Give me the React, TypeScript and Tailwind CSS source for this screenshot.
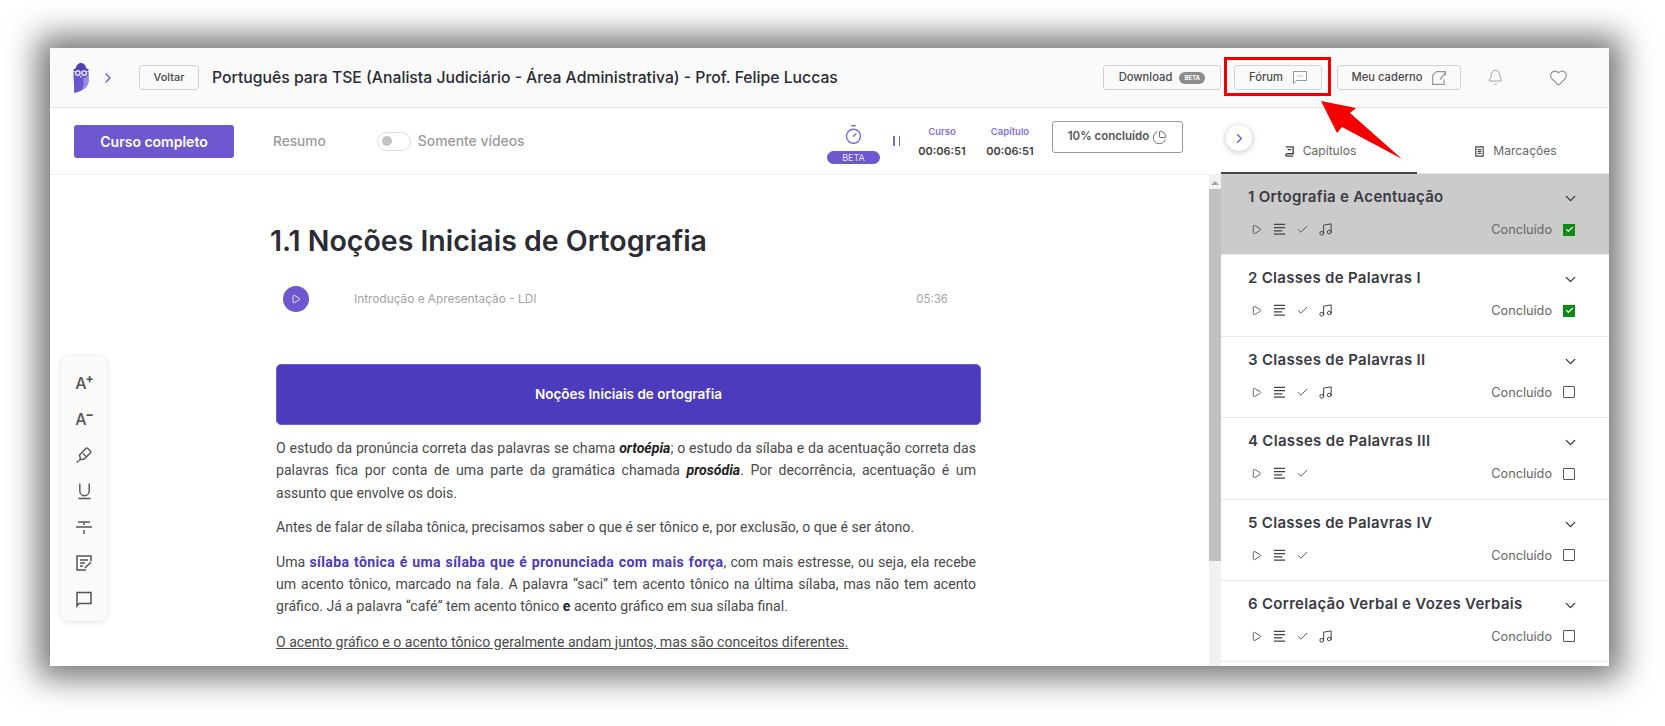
import { Bell, Heart, ChevronRight, ChevronDown, Timer, PieChart, Music, Check, Play } from "lucide-react";

const chapters = [
  { t: "1 Ortografia e Acentuação", sel: true, done: true, music: true },
  { t: "2 Classes de Palavras I", done: true, music: true },
  { t: "3 Classes de Palavras II", music: true },
  { t: "4 Classes de Palavras III" },
  { t: "5 Classes de Palavras IV" },
  { t: "6 Correlação Verbal e Vozes Verbais", music: true },
];

function Lines({ className = "" }: { className?: string }) {
  return (
    <svg viewBox="0 0 14 14" className={className} fill="none" stroke="currentColor" strokeWidth="1.4">
      <path d="M1 1.500h12M1 5h12M1 8.500h9M1 12h12" />
    </svg>
  );
}

function Owl() {
  return (
    <svg viewBox="0 0 16 30" className="w-[16px] h-[30px]">
      <path d="M0.500 9c0-1 15-1 15 0v9c0 6-6 10-14.500 12C1.500 26 .5 14 .5 9z" fill="#6a55cc" />
      <path d="M10 15c3 0 4-2 5.500-4v7c0 5-3 7-7 9 2-3 3-7 1.500-12z" fill="#9c8be6" />
      <path d="M3 5c0-3 3-5 5-5s5 2 5 5l2.500 1.500v1.500H.5V6.500z" fill="#5240b8" />
      <circle cx="4.800" cy="10" r="3" fill="#d9d3f5" />
      <circle cx="11.200" cy="10" r="3" fill="#d9d3f5" />
      <circle cx="4.800" cy="10" r="1.300" fill="#5240b8" />
      <circle cx="11.200" cy="10" r="1.300" fill="#5240b8" />
      <path d="M7 13h2l-1 2z" fill="#f1eefc" />
    </svg>
  );
}

function HeadButton({ children, className = "" }: { children: React.ReactNode; className?: string }) {
  return (
    <div className={`h-[25px] flex items-center justify-center border-[1.5px] border-[#d2d2d2] rounded-[3px] bg-[#fafafa] text-[11.200px] font-medium text-[#4a4a4a] ${className}`}>
      {children}
    </div>
  );
}

export default function App() {
  return (
    <div className="w-full h-[726px] bg-white pt-[48px] pl-[50px] overflow-hidden font-['Inter',sans-serif]">
      <div className="relative w-[1559px] h-[618px] flex flex-col bg-white shadow-[0_0_30px_12px_rgba(0,0,0,0.55)]">
        <header className="h-[60px] shrink-0 flex items-center bg-[#fafafa] border-b border-[#e4e4e4]">
          <div className="ml-[23px] mt-[1px] flex"><Owl /></div>
          <ChevronRight className="ml-[11px] w-[16px] h-[16px] text-[#6e57cf]" />
          <div className="ml-[23px] w-[60px] h-[25px] flex items-center justify-center border-[1.5px] border-[#d2d2d2] rounded-[3px] text-[11px] font-medium text-[#4a4a4a]">Voltar</div>
          <h1 className="ml-[13px] text-[15.750px] font-medium text-[#2b2b33] whitespace-nowrap">Português para TSE (Analista Judiciário - Área Administrativa) - Prof. Felipe Luccas</h1>
          <div className="ml-auto flex items-center">
            <HeadButton className="w-[118px] gap-[7px]">
              Download
              <span className="w-[26px] h-[12px] rounded-full bg-[#8c8c8c] text-white text-[6px] font-bold flex items-center justify-center">BETA</span>
            </HeadButton>
            <HeadButton className="ml-[13px] w-[88px] gap-[10px]">
              Fórum
              <svg viewBox="0 0 14 13" className="w-[14px] h-[13px] text-[#999]" fill="none" stroke="currentColor" strokeWidth="1">
                <path d="M.5.5h13v9H3.500l-3 3z" />
                <path d="M4.500 5h1M6.500 5h1M8.500 5h1" />
              </svg>
            </HeadButton>
            <HeadButton className="ml-[15px] w-[124px] gap-[10px]">
              Meu caderno
              <svg viewBox="0 0 14 14" className="w-[14px] h-[14px] text-[#999]" fill="none" stroke="currentColor" strokeWidth="1.200">
                <path d="M10 .6H4.500L.6 4.500v8.900h11.500V8.500M13.400 2 8 8.500" />
                <path d="M10 .6h3.400v4" />
              </svg>
            </HeadButton>
            <Bell className="ml-[26px] w-[17px] h-[17px] text-[#999]" strokeWidth={1.3} />
            <Heart className="ml-[45px] mr-[41px] w-[19px] h-[19px] text-[#888]" strokeWidth={1.3} />
          </div>
        </header>

        <div className="flex-1 min-h-0 flex">
          <div className="flex-1 min-w-0 flex flex-col">
            <div className="h-[67px] shrink-0 flex items-center border-b border-[#efefef]">
              <div className="ml-[24px] w-[160px] h-[33px] rounded-[3px] bg-[#6e57cf] text-white text-[14px] font-semibold flex items-center justify-center">Curso completo</div>
              <span className="ml-[39px] text-[13.700px] font-medium text-[#9a9a9a]">Resumo</span>
              <div className="ml-[51px] w-[34px] h-[19px] rounded-full border border-[#ddd] flex items-center pl-[4px]">
                <span className="w-[10px] h-[10px] rounded-full bg-[#c4c4c4]"></span>
              </div>
              <span className="ml-[7px] text-[13.900px] font-medium text-[#9a9a9a]">Somente vídeos</span>
              <div className="ml-auto flex items-center">
                <div className="mt-[6px] flex flex-col items-center w-[53px]">
                  <Timer className="w-[21px] h-[21px] text-[#7a65d6]" strokeWidth={1.6} />
                  <span className="mt-[6px] w-[53px] h-[13px] rounded-full bg-[#6e57cf] text-[#e8e4fa] text-[9px] flex items-center justify-center">BETA</span>
                </div>
                <div className="ml-[13px] flex gap-[4px]">
                  <span className="w-[1.500px] h-[10px] bg-[#7a65d6]"></span>
                  <span className="w-[1.500px] h-[10px] bg-[#7a65d6]"></span>
                </div>
                <div className="ml-[16px] mt-[2px] w-[52px] flex flex-col items-center">
                  <span className="text-[9.500px] font-semibold text-[#8571dc]">Curso</span>
                  <span className="mt-[4px] text-[11px] font-semibold text-[#3d3d3d]">00:06:51</span>
                </div>
                <div className="ml-[16px] mt-[2px] w-[52px] flex flex-col items-center">
                  <span className="text-[9.500px] font-semibold text-[#8571dc]">Capítulo</span>
                  <span className="mt-[4px] text-[11px] font-semibold text-[#3d3d3d]">00:06:51</span>
                </div>
                <div className="ml-[16px] mr-[38px] mb-[8px] w-[131px] h-[32px] border-[1.500px] border-[#999] rounded-[3px] flex items-center justify-center gap-[3px] text-[11.500px] font-semibold text-[#555]">
                  10% concluído <PieChart className="w-[15px] h-[15px]" strokeWidth={1.4} />
                </div>
              </div>
            </div>

            <div className="relative flex-1 min-h-0 flex">
              <div className="flex-1 min-w-0 overflow-hidden pl-[226px]">
                <h2 className="ml-[-6px] mt-[47px] text-[28.500px] leading-[38px] font-semibold text-[#2c2c34] whitespace-nowrap">1.1 Noções Iniciais de Ortografia</h2>
                <div className="mt-[26px] h-[26px] w-[672px] flex items-center">
                  <span className="ml-[7px] w-[26px] h-[26px] rounded-full bg-[#6e57cf] flex items-center justify-center">
                    <Play className="w-[10px] h-[10px] text-white" strokeWidth={2} />
                  </span>
                  <span className="ml-[45px] mt-[2px] text-[11.850px] text-[#a3a3a3]">Introdução e Apresentação - LDI</span>
                  <span className="ml-auto mt-[2px] text-[11.500px] text-[#a3a3a3]">05:36</span>
                </div>
                <div className="mt-[52px] w-[705px] h-[61px] rounded-[5px] bg-[#4c3bbd] border border-[#6d5fc9] text-white text-[13.500px] font-semibold flex items-center justify-center">Noções Iniciais de ortografia</div>
                <div className="mt-[12px] w-[700px] font-['Roboto',sans-serif] text-[14.100px] leading-[22.400px] text-[#4a4a4a]">
                  <p className="text-justify">O estudo da pronúncia correta das palavras se chama <b className="italic text-[#222]">ortoépia</b>; o estudo da sílaba e da acentuação correta das palavras fica por conta de uma parte da gramática chamada <b className="italic text-[#222]">prosódia</b>. Por decorrência, acentuação é um assunto que envolve os dois.</p>
                  <p className="mt-[12px]">Antes de falar de sílaba tônica, precisamos saber o que é ser tônico e, por exclusão, o que é ser átono.</p>
                  <p className="mt-[12px] text-justify">Uma <b className="text-[#4c3bbd] tracking-[0.35px]">sílaba tônica é uma sílaba que é pronunciada com mais força</b>, com mais estresse, ou seja, ela recebe um acento tônico, marcado na fala. A palavra “saci” tem acento tônico na última sílaba, mas não tem acento gráfico. Já a palavra “café” tem acento tônico <b className="text-[#222]">e</b> acento gráfico em sua sílaba final.</p>
                  <p className="mt-[13px] underline">O acento gráfico e o acento tônico geralmente andam juntos, mas são conceitos diferentes.</p>
                </div>
              </div>
              <div className="w-[12px] shrink-0 bg-[#f1f1f1] flex flex-col items-center">
                <span className="mt-[6px] mb-[4px] w-0 h-0 border-x-[4px] border-x-transparent border-b-[4px] border-b-[#a3a3a3]"></span>
                <div className="w-full h-[372px] bg-[#c1c1c1]"></div>
              </div>
              <div className="absolute left-[11px] top-[181px] w-[46px] h-[265px] rounded-[7px] bg-[#fafafa] shadow-[0_1px_6px_rgba(0,0,0,0.12)] flex flex-col items-center pt-[15px] gap-[12px] text-[#555]">
                <div className="h-[24px] flex items-start justify-center text-[16px] font-medium leading-[24px] tracking-[-1px]">A<span className="text-[12px] leading-[15px] font-extrabold">+</span></div>
                <div className="h-[24px] flex items-start justify-center text-[16px] font-medium leading-[24px] tracking-[-1px]">A<span className="text-[12px] leading-[15px] font-extrabold">−</span></div>
                <svg viewBox="0 0 16 16" className="w-[16px] h-[24px]" fill="none" stroke="currentColor" strokeWidth="1.400">
                  <path d="M3.500 8 10 1.200c.5-.4 1-.4 1.500 0l3 3c.4.5.4 1 0 1.500L8 12.200l-3.500.3z" />
                  <path d="M7 6.500 10 9.500" strokeWidth="1.200" />
                  <path d="M4 12.500 2.800 14" />
                  <circle cx="1.500" cy="14.800" r="1" fill="currentColor" stroke="none" />
                </svg>
                <svg viewBox="0 0 16 18" className="w-[15px] h-[24px]" fill="none" stroke="currentColor" strokeWidth="1.500">
                  <path d="M3 1v8a5 5 0 0 0 10 0V1M1.500 17h13" />
                </svg>
                <svg viewBox="0 0 16 24" className="w-[16px] h-[24px]" fill="none" stroke="currentColor" strokeWidth="1.500"><path d="M2 7h12M8 7v3M0 12h16M8 15v4" /></svg>
                <svg viewBox="0 0 16 16" className="w-[16px] h-[24px]" fill="none" stroke="currentColor" strokeWidth="1.500">
                  <path d="M15 6V1H1v14h9M4 5h8M4 8h5M4 11h3M9 13l6-6" />
                </svg>
                <svg viewBox="0 0 16 16" className="w-[16px] h-[24px]" fill="none" stroke="currentColor" strokeWidth="1.500">
                  <path d="M1 15V1.500h14v11H3z" />
                </svg>
              </div>
            </div>
          </div>

          <aside className="relative w-[388px] shrink-0 flex flex-col">
            <div className="h-[66px] shrink-0 flex border-b border-[#e4e4e4]">
              <div className="w-[196px] h-[66px] border-b-2 border-[#444] flex items-end justify-center pl-[2px] pb-[12px] gap-[8px] text-[12.100px] text-[#666]">
                <svg viewBox="0 0 12 12" className="w-[11px] h-[11px] mb-[3px] text-[#444]" fill="none" stroke="currentColor" strokeWidth="1.500"><path d="M2 1h8v7.500H3a1.300 1.300 0 0 0 0 2.500h7M4 4h4" /></svg>
                Capítulos
              </div>
              <div className="flex-1 flex items-end justify-center pl-[5px] pb-[13px] gap-[8px] text-[12.100px] text-[#666]">
                <svg viewBox="0 0 12 12" className="w-[11px] h-[11px] mb-[3px] text-[#444]" fill="none" stroke="currentColor" strokeWidth="1.300"><path d="M2 1h8v10H2zM4 4h4M4 6h4M4 8h4" /></svg>
                Marcações
              </div>
            </div>
            <div className="flex-1 min-h-0 overflow-hidden">
              {chapters.map((c) => (
                <div key={c.t} className={`h-[81.400px] pl-[27px] pr-[32px] border-b border-[#e8e8e8] ${c.sel ? "bg-[#cbcbcb]" : "bg-white"}`}>
                  <div className="pt-[12px] h-[46px] flex items-start justify-between mr-[-2px]">
                    <span className="text-[15px] tracking-[0.3px] leading-[22px] font-semibold text-[#3a3a42] whitespace-nowrap">{c.t}</span>
                    <ChevronDown className="mt-[4px] w-[17px] h-[17px] text-[#333]" strokeWidth={1.8} />
                  </div>
                  <div className="flex items-center text-[#444] mr-[2px]">
                    <Play className="ml-[3px] w-[11px] h-[11px]" strokeWidth={1.8} />
                    <Lines className="ml-[11px] w-[13px] h-[13px]" />
                    <Check className="ml-[10px] w-[13px] h-[13px]" strokeWidth={1.6} />
                    {c.music && <Music className="ml-[9px] w-[15px] h-[15px]" strokeWidth={1.6} />}
                    <span className="ml-auto text-[12.700px] text-[#666]">Concluído</span>
                    {c.done ? (
                      <span className="ml-[11px] w-[12px] h-[12px] bg-[#0f8a12] flex items-center justify-center">
                        <Check className="w-[9px] h-[9px] text-white" strokeWidth={3} />
                      </span>
                    ) : (
                      <span className="ml-[11px] w-[12px] h-[12px] border border-[#555] rounded-[1px]"></span>
                    )}
                  </div>
                </div>
              ))}
            </div>
            <div className="absolute left-[5px] top-[17px] w-[26px] h-[26px] rounded-full bg-white shadow-[0_1px_6px_rgba(0,0,0,0.25)] flex items-center justify-center">
              <ChevronRight className="w-[15px] h-[15px] text-[#6e57cf]" />
            </div>
          </aside>
        </div>

        <div className="absolute left-[1174px] top-[9px] w-[107px] h-[39px] border-[3px] border-[#f00000]"></div>
        <svg viewBox="0 0 90 64" className="absolute left-[1268px] top-[50px] w-[90px] h-[64px]">
          <path d="M3 3 L38 10 L32 15 L84 61 L24 29 L19 35 Z" fill="#f50000" />
        </svg>
      </div>
    </div>
  );
}
